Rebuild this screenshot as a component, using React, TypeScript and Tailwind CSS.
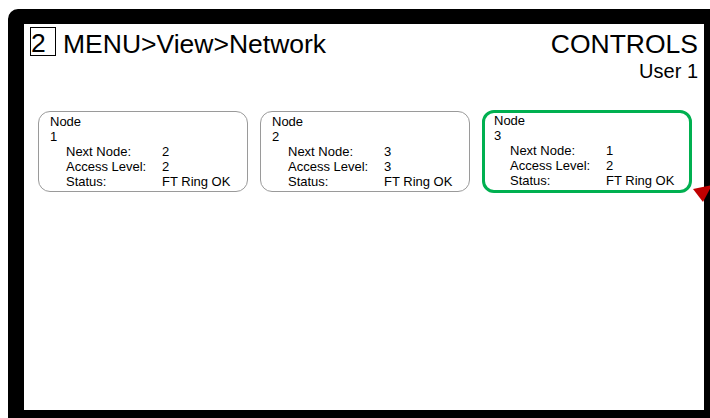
import React from 'react';

interface NodeInfo {
  id: number;
  next: number;
  access: number;
  status: string;
  selected?: boolean;
}

const nodes: NodeInfo[] = [
  { id: 1, next: 2, access: 2, status: 'FT Ring OK' },
  { id: 2, next: 3, access: 3, status: 'FT Ring OK' },
  { id: 3, next: 1, access: 2, status: 'FT Ring OK', selected: true },
];

function NodeCard({ node }: { node: NodeInfo }) {
  return (
    <div
      className={
        node.selected
          ? 'w-[210px] h-[83px] rounded-[12px] border-[3px] border-[#00b050] pl-[9px] pt-0 text-[13px] leading-[15px]'
          : 'w-[210px] h-[81px] rounded-[12px] border border-[#9a9a9a] pl-[11px] pt-[2px] mt-[1px] text-[13px] leading-[15px]'
      }
    >
      <div>Node</div>
      <div>{node.id}</div>
      <div className="grid grid-cols-[96px_1fr] pl-[16px]">
        <span>Next Node:</span>
        <span>{node.next}</span>
        <span>Access Level:</span>
        <span>{node.access}</span>
        <span>Status:</span>
        <span>{node.status}</span>
      </div>
    </div>
  );
}

export default function App() {
  return (
    <div
      className="relative w-[710px] h-[418px] overflow-hidden bg-white pl-[8px] pt-[9px] text-black"
      style={{ fontFamily: '"Liberation Sans", Arial, sans-serif' }}
    >
      {/* Screen frame */}
      <div className="w-[702px] h-[409px] border-l-[16px] border-t-[15px] border-r-[6px] border-b-[8px] border-black rounded-tl-[10px] bg-white">
        <div className="flex justify-between pl-[6px] pr-[6px]">
          <div className="flex items-start pt-[3px]">
            <div className="w-[26px] h-[29px] border border-black text-[26.5px] leading-[31px] pl-0">2</div>
            <div className="ml-[7px] pt-[2px] text-[26.5px] leading-[30px]">MENU&gt;View&gt;Network</div>
          </div>
          <div className="flex flex-col items-end pt-[5px]">
            <div className="text-[26.5px] leading-[30px]">CONTROLS</div>
            <div className="text-[20px] leading-[24px]">User 1</div>
          </div>
        </div>

        <div className="flex gap-[12px] pl-[14px] mt-[27px]">
          {nodes.map((n) => (
            <NodeCard key={n.id} node={n} />
          ))}
        </div>
      </div>

      {/* Scroll marker */}
      <svg className="absolute left-[688px] top-[182px]" width="24" height="24" viewBox="0 0 24 24">
        <polygon points="5,7 24,3 15,20" fill="#c00000" />
      </svg>
    </div>
  );
}
